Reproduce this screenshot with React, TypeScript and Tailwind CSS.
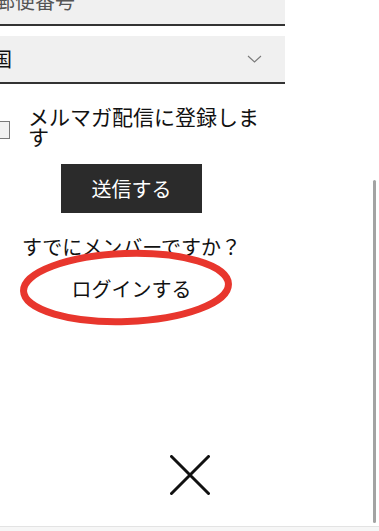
import React from "react";

export default function App() {
  return (
    <div
      className="relative w-[379px] h-[531px] overflow-hidden bg-white flex flex-col text-[#111]"
      style={{ fontFamily: '"Noto Sans CJK JP", "Noto Sans", sans-serif' }}
    >
      <div className="ml-[-22px] w-[307px] flex flex-col">
        <div className="mt-[-22px] h-[48px] bg-[#f0f0f0] border-b-2 border-[#333] flex items-center pl-[17px] text-[20px] text-[#555]">
          郵便番号
        </div>
        <div className="mt-[10px] h-[48px] bg-[#f0f0f0] border-b-2 border-[#333] flex items-center justify-between pl-[14px] pr-[23px] text-[20px]">
          <span>国</span>
          <svg width="15" height="8" viewBox="0 0 15 8" fill="none">
            <path d="M1 1 L7.5 7 L14 1" stroke="#7a7a7a" strokeWidth="1.1" />
          </svg>
        </div>
        <div className="mt-[22px] flex items-start">
          <div className="ml-[15px] mt-[15px] w-[17px] h-[18px] shrink-0 border border-[#7a7a7a] bg-[#f2f2f2]" />
          <div className="ml-[18px] w-[245px] text-[21px] leading-[20px]">メルマガ配信に登録します</div>
        </div>
        <div className="mt-[18px] self-center w-[141px] h-[49px] bg-[#2b2b2b] text-white text-[20px] flex items-center justify-center">
          送信する
        </div>
        <div className="mt-[20px] text-center text-[20px] leading-[28px]">すでにメンバーですか？</div>
        <div className="relative mt-[14px] text-center text-[20px] leading-[28px]">
          ログインする
          <svg
            className="absolute left-[39px] top-[-28px]"
            width="218"
            height="81"
            viewBox="0 0 218 81"
            fill="none"
          >
            <ellipse
              cx="109"
              cy="40.5"
              rx="102.5"
              ry="34"
              stroke="#e8362d"
              strokeWidth="7"
              transform="rotate(-2 109 40.5)"
            />
          </svg>
        </div>
      </div>
      <div className="mt-auto mb-[31px] flex justify-center">
        <svg width="40" height="40" viewBox="0 0 40 40" fill="none">
          <path d="M1.5 1.5 L38.5 38.5 M38.5 1.5 L1.5 38.5" stroke="#111" strokeWidth="3" strokeLinecap="round" />
        </svg>
      </div>
      <div className="h-[5px] border-t border-[#e3e3e3] bg-[#f6f6f6]" />
      <div className="absolute left-[373px] top-[180px] w-[3px] h-[343px] rounded-full bg-[#a3a3a3]" />
    </div>
  );
}
